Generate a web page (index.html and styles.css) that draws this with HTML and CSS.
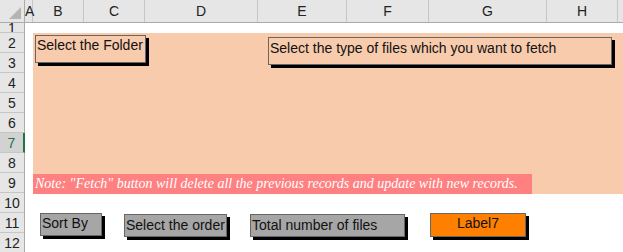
FILE: index.html
```html
<!DOCTYPE html>
<html lang="en">
<head>
    <meta charset="UTF-8">
    <meta name="viewport" content="width=device-width, initial-scale=1.0">
    <title>Fetch Files</title>
    <link rel="stylesheet" href="styles.css">
</head>
<body>
    <div class="colhead">
        <div class="corner"><span class="tri"></span></div>
        <div class="col col-a">A</div>
        <div class="col col-b">B</div>
        <div class="col col-c">C</div>
        <div class="col col-d">D</div>
        <div class="col col-e">E</div>
        <div class="col col-f">F</div>
        <div class="col col-g">G</div>
        <div class="col col-h">H</div>
        <div class="col col-rest"></div>
    </div>
    <div class="main">
        <div class="rowhead">
            <div class="row row-first"><span>1</span></div>
            <div class="row">2</div>
            <div class="row">3</div>
            <div class="row">4</div>
            <div class="row">5</div>
            <div class="row">6</div>
            <div class="row row-active">7</div>
            <div class="row">8</div>
            <div class="row">9</div>
            <div class="row">10</div>
            <div class="row">11</div>
            <div class="row">12</div>
        </div>
        <div class="canvas">
            <div class="spacer"></div>
            <div class="panel">
                <div class="panel-top">
                    <div class="box box-folder">Select the Folder</div>
                    <div class="box box-type">Select the type of files which you want to fetch</div>
                </div>
                <div class="note">Note: "Fetch" button will delete all the previous records and update with new records.</div>
            </div>
            <div class="controls">
                <div class="btn btn-sort">Sort By</div>
                <div class="btn btn-order">Select the order</div>
                <div class="btn btn-total">Total number of files</div>
                <div class="btn btn-label">Label7</div>
            </div>
        </div>
    </div>
</body>
</html>
```
FILE: styles.css
```css
* {
    box-sizing: border-box;
}
body {
    margin: 0;
    font-family: "Liberation Sans", Arial, sans-serif;
    font-size: 14px;
    color: #111;
    background: #fff;
    overflow: hidden;
}
.colhead {
    display: flex;
    height: 23px;
    background: #e6e6e6;
    border-bottom: 1px solid #ababab;
}
.corner {
    width: 25px;
    position: relative;
    border-right: 1px solid #ababab;
}
.tri {
    position: absolute;
    right: 3px;
    bottom: 3px;
    width: 0;
    height: 0;
    border-left: 12px solid transparent;
    border-bottom: 12px solid #b4b4b4;
}
.col {
    border-right: 1px solid #c6c6c6;
    text-align: center;
    line-height: 22px;
    font-size: 14px;
    color: #222;
}
.col-a { width: 8px; }
.col-b { width: 51px; }
.col-c { width: 61px; }
.col-d { width: 113px; }
.col-e { width: 89px; }
.col-f { width: 82px; }
.col-g { width: 118px; }
.col-h { width: 71px; }
.col-rest { flex: 1; border-right: none; }
.main {
    display: flex;
}
.rowhead {
    width: 25px;
    background: #e6e6e6;
    border-right: 1px solid #ababab;
}
.row {
    height: 20px;
    border-bottom: 1px solid #c6c6c6;
    text-align: center;
    line-height: 20px;
    font-size: 14px;
    color: #222;
}
.row-first {
    height: 10px;
    overflow: hidden;
    display: flex;
    align-items: flex-end;
    justify-content: center;
}
.row-first span {
    display: block;
    height: 16px;
    line-height: 16px;
    margin-bottom: -4px;
}
.row-active {
    background: #d2d2d2;
    color: #217346;
    border-right: 2px solid #217346;
    margin-right: -1px;
}
.canvas {
    flex: 1;
    padding-left: 8px;
}
.spacer {
    height: 10px;
}
.panel {
    height: 161px;
    background: #f8cbad;
    display: flex;
    flex-direction: column;
}
.panel-top {
    display: flex;
    align-items: flex-start;
}
.box {
    border: 1px solid #666;
    box-shadow: 3px 3px 0 #000;
    background: #f8cbad;
    height: 28px;
    padding: 1px 1px;
    font-size: 14px;
    white-space: nowrap;
}
.box-folder {
    width: 111px;
    margin: 2px 0 0 2px;
}
.box-type {
    width: 344px;
    margin: 4px 0 0 122px;
    padding-top: 2px;
}
.note {
    margin-top: auto;
    width: 499px;
    height: 20px;
    background: #ff8080;
    color: #fff;
    font-family: "Liberation Serif", "Times New Roman", serif;
    font-style: italic;
    font-size: 14px;
    line-height: 20px;
    padding-left: 2px;
    white-space: nowrap;
}
.controls {
    display: flex;
    align-items: flex-start;
    margin-top: 19px;
}
.btn {
    border: 1px solid #666;
    box-shadow: 3px 3px 0 #000;
    background: #a6a6a6;
    height: 23px;
    padding: 1px 1px;
    font-size: 14px;
    white-space: nowrap;
}
.btn-sort {
    width: 62px;
    margin-left: 7px;
}
.btn-order {
    width: 103px;
    margin: 1px 0 0 22px;
    padding-top: 2px;
}
.btn-total {
    width: 155px;
    margin: 1px 0 0 23px;
    padding-top: 2px;
}
.btn-label {
    width: 96px;
    height: 24px;
    margin-left: 25px;
    background: #ff8000;
    text-align: center;
}
```
